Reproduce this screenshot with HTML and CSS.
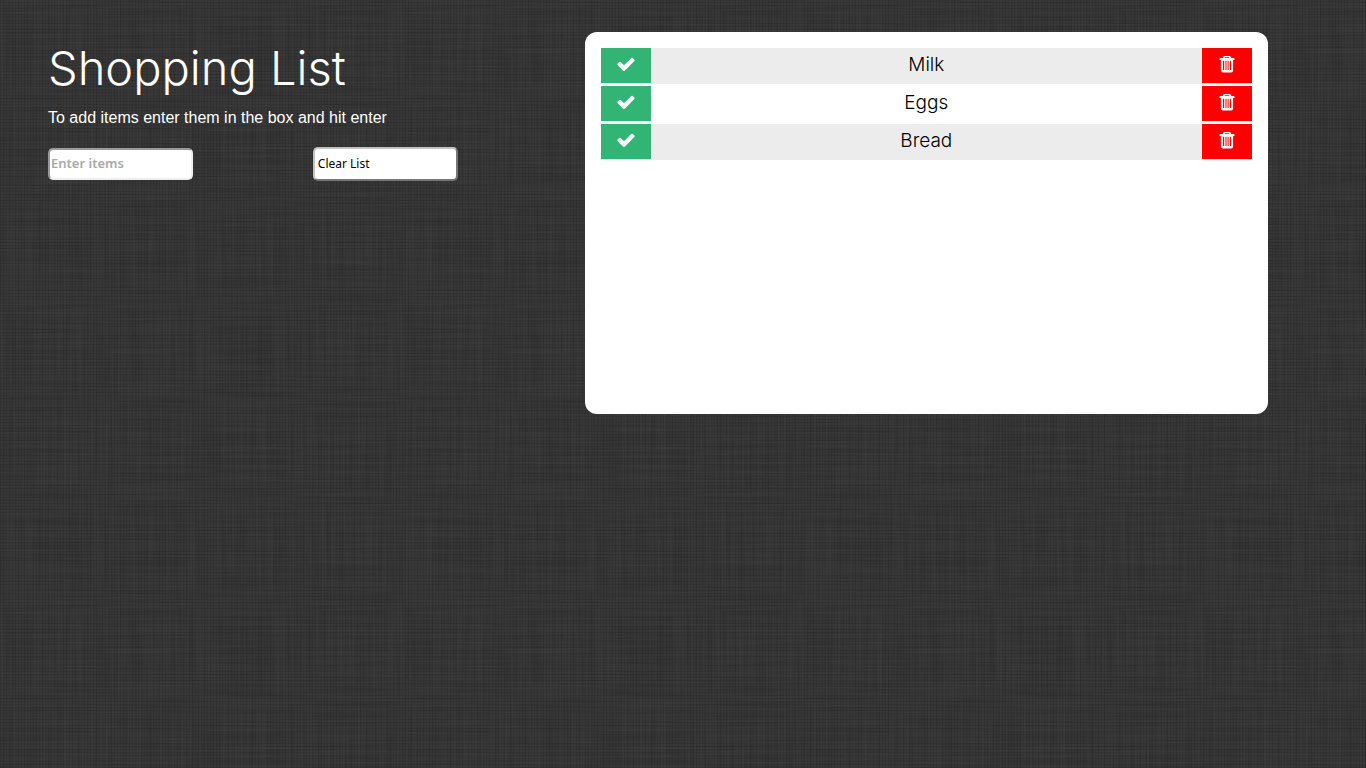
FILE: index.html
```html
<!DOCTYPE html>
<html lang="en">
<head>
<meta charset="utf-8">
<meta name="viewport" content="width=device-width, initial-scale=1">
<title>Shopping List</title>
<link rel="stylesheet" href="styles.css">
</head>
<body>
<svg class="sprites" aria-hidden="true">
  <symbol id="check" viewBox="0 0 1792 1792"><path d="M1671 566q0 40-28 68l-724 724-136 136q-28 28-68 28t-68-28l-136-136-362-362q-28-28-28-68t28-68l136-136q28-28 68-28t68 28l294 295 656-657q28-28 68-28t68 28l136 136q28 28 28 68z"/></symbol>
  <symbol id="trash" viewBox="0 0 20 20"><path fill-rule="evenodd" d="M7.500 2h5q1 0 1.400 1l.4 1.100h2.500q.7 0 .7.700v.7q0 .5-.5.500h-.9v10.300q0 2.300-2 2.300h-8.200q-2 0-2-2.300v-10.300h-.9q-.5 0-.5-.5v-.7q0-.7.7-.7h2.500l.4-1.100q.4-1 1.400-1zM7.900 3.200l-.4.900h5l-.4-.9zM6 6.800v9.200h1.200v-9.200zM8.500 6.800v9.200h1v-9.200zM10.600 6.800v9.200h1v-9.200zM12.900 6.800v9.200h1.200v-9.200z"/></symbol>
</svg>
<main class="page">
  <section class="intro">
    <h1 class="title">Shopping List</h1>
    <p class="hint">To add items enter them in the box and hit enter</p>
    <form class="controls">
      <input class="field" type="text" placeholder="Enter items" aria-label="Enter items">
      <button class="clear" type="button">Clear List</button>
    </form>
  </section>
  <section class="panel" aria-label="Items">
    <ul class="items">
      <li class="item">
        <button class="action done" type="button" aria-label="Check off Milk"><svg class="icon"><use href="#check"/></svg></button>
        <span class="name">Milk</span>
        <button class="action remove" type="button" aria-label="Delete Milk"><svg class="icon"><use href="#trash"/></svg></button>
      </li>
      <li class="item">
        <button class="action done" type="button" aria-label="Check off Eggs"><svg class="icon"><use href="#check"/></svg></button>
        <span class="name">Eggs</span>
        <button class="action remove" type="button" aria-label="Delete Eggs"><svg class="icon"><use href="#trash"/></svg></button>
      </li>
      <li class="item">
        <button class="action done" type="button" aria-label="Check off Bread"><svg class="icon"><use href="#check"/></svg></button>
        <span class="name">Bread</span>
        <button class="action remove" type="button" aria-label="Delete Bread"><svg class="icon"><use href="#trash"/></svg></button>
      </li>
    </ul>
  </section>
</main>
</body>
</html>
```
FILE: styles.css
```css
* { box-sizing: border-box; }

body {
  margin: 0;
  min-height: 100vh;
  color: #fff;
  font-family: "Liberation Sans", Arial, sans-serif;
  background-color: #323232;
  /* woven cloth: long horizontal and vertical threads over a fine mesh */
  background-image:
    url("data:image/svg+xml,%3Csvg xmlns='http://www.w3.org/2000/svg' width='400' height='300'%3E%3Cfilter id='h' x='0' y='0' width='1' height='1'%3E%3CfeTurbulence type='fractalNoise' baseFrequency='.01 .5' numOctaves='2' seed='3' stitchTiles='stitch'/%3E%3CfeColorMatrix values='0 0 0 0 1 0 0 0 0 1 0 0 0 0 1 .06 0 0 0 -.018'/%3E%3C/filter%3E%3Cfilter id='v' x='0' y='0' width='1' height='1'%3E%3CfeTurbulence type='fractalNoise' baseFrequency='.5 .01' numOctaves='2' seed='8' stitchTiles='stitch'/%3E%3CfeColorMatrix values='0 0 0 0 1 0 0 0 0 1 0 0 0 0 1 .06 0 0 0 -.018'/%3E%3C/filter%3E%3Crect width='400' height='300' filter='url(%23h)'/%3E%3Crect width='400' height='300' filter='url(%23v)'/%3E%3C/svg%3E"),
    repeating-linear-gradient(0deg, rgba(0, 0, 0, .1) 0 1px, transparent 1px 3px),
    repeating-linear-gradient(90deg, rgba(0, 0, 0, .1) 0 1px, transparent 1px 3px);
}

.sprites { display: none; }

.page {
  display: grid;
  grid-template-columns: 30vw 50vw;
  column-gap: 127px;
  align-items: start;
  padding: 32px 0 32px 48px;
}

.title {
  margin: 0;
  padding-top: 8px;
  font-family: Inter, "Liberation Sans", sans-serif;
  font-size: 47px;
  font-weight: 300;
  line-height: 56px;
}

.hint {
  margin: 12px 0 19px;
  font-size: 16px;
  line-height: 20px;
}

.controls {
  display: flex;
  justify-content: space-between;
  align-items: center;
}

.field,
.clear {
  width: 145px;
  border-radius: 5px;
  background: #fff;
  font-family: "Noto Sans", sans-serif;
}

.field {
  height: 32px;
  padding: 0 1px 2px;
  border: 2px solid;
  border-color: #9a9a9a #eee #eee #9a9a9a;
  font-size: 13px;
  font-weight: 600;
}

.field::placeholder { color: #a9a9a9; }

.clear {
  height: 34px;
  padding: 0 3px 2px;
  border: 2px solid;
  border-color: #c3c3c3 #767676 #767676 #c3c3c3;
  color: #000;
  font-size: 12px;
  text-align: left;
}

.panel {
  min-height: 382px;
  padding: 16px;
  border-radius: 12px;
  background: #fff;
  color: #000;
}

.items {
  display: grid;
  row-gap: 2px;
  margin: 0;
  padding: 0;
  list-style: none;
}

.item {
  display: flex;
  align-items: flex-start;
  height: 36px;
}

.item:nth-child(odd) { background: #ececec; }

.name {
  flex: 1;
  font-family: Inter, "Liberation Sans", sans-serif;
  font-size: 19px;
  font-weight: 300;
  line-height: 33px;
  text-align: center;
}

.action {
  display: flex;
  justify-content: center;
  align-items: center;
  width: 50px;
  height: 35px;
  padding: 0 0 3px;
  border: 0;
  color: #fff;
}

.done { background: #32b574; }
.remove { background: #f00; }

.icon {
  width: 20px;
  height: 20px;
  fill: currentColor;
}
```
